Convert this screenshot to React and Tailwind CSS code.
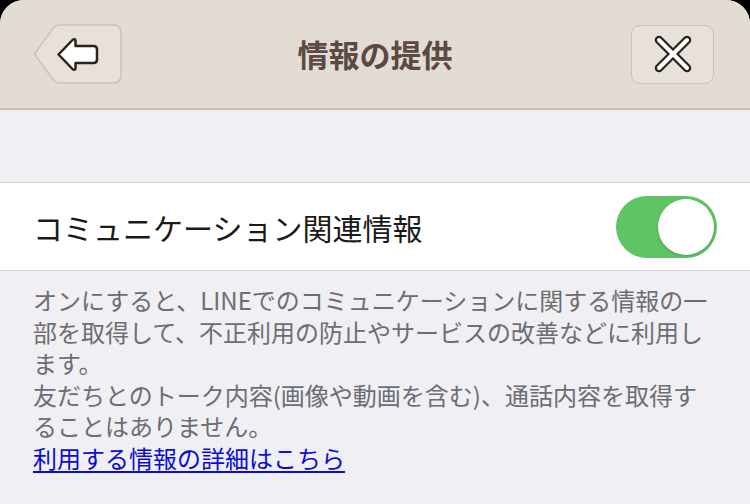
export default function App() {
  const jp = { fontFamily: '"Noto Sans CJK JP", "Noto Sans", sans-serif' };
  return (
    <div className="w-[750px] h-[504px] bg-black overflow-hidden" style={jp}>
      <div className="w-full h-full bg-[#efeff4] rounded-t-[24px] overflow-hidden flex flex-col">
        <div className="h-[110px] shrink-0 bg-[#e3dcd5] border-b-2 border-[#c9bfb4] flex items-center justify-between pl-[32px] pr-[36px] relative">
          <button className="w-[90px] h-[60px] flex items-center justify-center">
            <svg width="90" height="60" viewBox="0 0 90 60">
              <path d="M 2.5 30 L 21 4.5 Q 23.5 1 28 1 L 81 1 Q 89 1 89 9 L 89 51 Q 89 59 81 59 L 28 59 Q 23.5 59 21 55.5 Z" fill="#e7e1da" stroke="#cbc2b8" strokeWidth="1.5" />
              <g transform="translate(25 14)">
                <path d="M 1.5 16.5 L 16 1.5 Q 18 0.5 18.5 2.5 L 18.5 8 L 36.5 8 Q 40 8 40 11.5 L 40 21.5 Q 40 25 36.5 25 L 18.5 25 L 18.5 30.5 Q 18 32.5 16 31.5 Z" fill="#ffffff" stroke="#2a221e" strokeWidth="2.5" strokeLinejoin="round" />
              </g>
            </svg>
          </button>
          <div className="absolute left-0 right-0 top-0 h-[108px] flex items-center justify-center pointer-events-none">
            <span className="text-[31px] font-bold text-[#5b4943]">情報の提供</span>
          </div>
          <button className="w-[83px] h-[59px] rounded-[9px] bg-[#e7e1da] border-[1.5px] border-[#cbc2b8] flex items-center justify-center">
            <svg width="38" height="38" viewBox="0 0 38 38">
              <g strokeLinecap="round">
                <line x1="5" y1="5" x2="33" y2="33" stroke="#2a221e" strokeWidth="8.5" />
                <line x1="33" y1="5" x2="5" y2="33" stroke="#2a221e" strokeWidth="8.5" />
                <line x1="5" y1="5" x2="33" y2="33" stroke="#ffffff" strokeWidth="4" />
                <line x1="33" y1="5" x2="5" y2="33" stroke="#ffffff" strokeWidth="4" />
              </g>
            </svg>
          </button>
        </div>
        <div className="h-[72px] shrink-0" />
        <div className="h-[89px] shrink-0 bg-white border-y border-[#d4d4d8] flex items-center justify-between pl-[33px] pr-[33px]">
          <span className="text-[30px] text-[#1a1a1a] leading-none">コミュニケーション関連情報</span>
          <div className="w-[101px] h-[62px] rounded-full bg-[#5fc464] flex items-center justify-end p-[3px]">
            <div className="w-[56px] h-[56px] rounded-full bg-white shadow-[0_1px_3px_rgba(0,0,0,0.2)]" />
          </div>
        </div>
        <div className="pt-[13px] px-[33px] text-[24px] leading-[31.6px] text-[#6d6d72] whitespace-nowrap">
          <div>オンにすると、LINEでのコミュニケーションに関する情報の一</div>
          <div>部を取得して、不正利用の防止やサービスの改善などに利用し</div>
          <div>ます。</div>
          <div>友だちとのトーク内容(画像や動画を含む)、通話内容を取得す</div>
          <div>ることはありません。</div>
          <div>
            <a href="#" className="text-[#0b0bd9] underline underline-offset-[3px]">利用する情報の詳細はこちら</a>
          </div>
        </div>
      </div>
    </div>
  );
}
